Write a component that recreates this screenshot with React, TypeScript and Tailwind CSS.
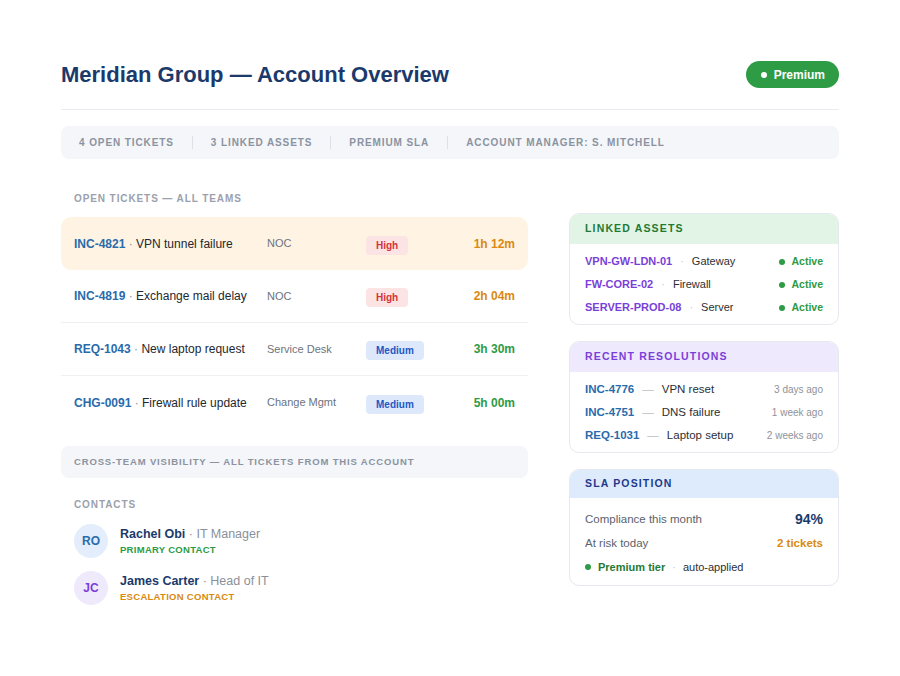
import React from "react";

const tickets = [
  { id: "INC-4821", name: "VPN tunnel failure", team: "NOC", pri: "High", time: "1h 12m", hl: true },
  { id: "INC-4819", name: "Exchange mail delay", team: "NOC", pri: "High", time: "2h 04m", hl: false },
  { id: "REQ-1043", name: "New laptop request", team: "Service Desk", pri: "Medium", time: "3h 30m", hl: false },
  { id: "CHG-0091", name: "Firewall rule update", team: "Change Mgmt", pri: "Medium", time: "5h 00m", hl: false },
];

const assets = [
  { id: "VPN-GW-LDN-01", type: "Gateway" },
  { id: "FW-CORE-02", type: "Firewall" },
  { id: "SERVER-PROD-08", type: "Server" },
];

const resolutions = [
  { id: "INC-4776", name: "VPN reset", when: "3 days ago" },
  { id: "INC-4751", name: "DNS failure", when: "1 week ago" },
  { id: "REQ-1031", name: "Laptop setup", when: "2 weeks ago" },
];

export default function App() {
  return (
    <div className="min-h-[676px] bg-white" style={{ fontFamily: '"Liberation Sans", Arial, sans-serif' }}>
      <div className="mx-auto w-[778px] pt-[61px]">
        <div className="flex items-center justify-between border-b border-[#e8ebf0] pb-[21px]">
          <h1 className="text-[22px] font-bold leading-[27px] text-[#1b3a6b]">
            Meridian Group — Account Overview
          </h1>
          <div className="flex h-[27px] items-center gap-[7px] rounded-full bg-[#2e9b45] pl-[15px] pr-[14px] text-[12px] font-bold text-white">
            <span className="h-[6px] w-[6px] rounded-full bg-white" />
            Premium
          </div>
        </div>

        <div className="mt-[16px] flex h-[33px] items-center rounded-[8px] bg-[#f4f6f9] px-[18px] text-[10px] font-bold tracking-[0.09em] text-[#8b93a1]">
          <span>4 OPEN TICKETS</span>
          <span className="mx-[18px] h-[13px] w-px bg-[#dde1e7]" />
          <span>3 LINKED ASSETS</span>
          <span className="mx-[18px] h-[13px] w-px bg-[#dde1e7]" />
          <span>PREMIUM SLA</span>
          <span className="mx-[18px] h-[13px] w-px bg-[#dde1e7]" />
          <span>ACCOUNT MANAGER: S. MITCHELL</span>
        </div>

        <div className="mt-[30px] flex gap-[41px]">
          <div className="w-[467px]">
            <div className="px-[13px] text-[10px] font-bold leading-[20px] tracking-[0.09em] text-[#9aa1ad]">
              OPEN TICKETS — ALL TEAMS
            </div>
            <div className="mt-[8px]">
              {tickets.map((t, i) => (
                <div
                  key={t.id}
                  className={
                    "flex h-[53px] items-center px-[13px] " +
                    (t.hl
                      ? "rounded-[10px] bg-[#fff3e3]"
                      : i < tickets.length - 1
                      ? "border-b border-[#eef0f3]"
                      : "")
                  }
                >
                  <div className="w-[193px] whitespace-nowrap text-[12px]">
                    <span className="font-bold text-[#2a6bac]">{t.id}</span>
                    <span className="text-[#8a8f98]"> · </span>
                    <span className="text-[#222831]">{t.name}</span>
                  </div>
                  <div className="w-[99px] text-[11px] text-[#6d737d]">{t.team}</div>
                  <div className="flex-1">
                    <span
                      className={
                        "inline-block rounded-[4px] px-[10px] py-[2px] text-[10px] font-bold " +
                        (t.pri === "High" ? "bg-[#fde4e4] text-[#d1343a]" : "bg-[#dde9fb] text-[#2456c4]")
                      }
                    >
                      {t.pri}
                    </span>
                  </div>
                  <div
                    className={
                      "text-[12px] font-bold " + (t.pri === "High" ? "text-[#d98a10]" : "text-[#2e9b45]")
                    }
                  >
                    {t.time}
                  </div>
                </div>
              ))}
            </div>

            <div className="mt-[17px] flex h-[32px] items-center rounded-[8px] bg-[#f4f6f9] px-[13px] text-[9.5px] font-bold tracking-[0.09em] text-[#8b93a1]">
              CROSS-TEAM VISIBILITY — ALL TICKETS FROM THIS ACCOUNT
            </div>

            <div className="mt-[20px] px-[13px] text-[10px] font-bold leading-[14px] tracking-[0.09em] text-[#9aa1ad]">
              CONTACTS
            </div>
            <div className="mt-[12px] flex flex-col gap-[13px] px-[13px]">
              <div className="flex items-center gap-[12px]">
                <div className="flex h-[34px] w-[34px] items-center justify-center rounded-full bg-[#e3edfc] text-[12px] font-bold text-[#2a6bac]">
                  RO
                </div>
                <div className="mt-[1px]">
                  <div className="text-[12.5px] leading-[17px]">
                    <span className="font-bold text-[#1b3a6b]">Rachel Obi</span>
                    <span className="text-[#8a909a]"> · IT Manager</span>
                  </div>
                  <div className="text-[9.5px] font-bold leading-[14px] tracking-[0.03em] text-[#2e9b45]">
                    PRIMARY CONTACT
                  </div>
                </div>
              </div>
              <div className="flex items-center gap-[12px]">
                <div className="flex h-[34px] w-[34px] items-center justify-center rounded-full bg-[#efe9fc] text-[12px] font-bold text-[#7a3fd9]">
                  JC
                </div>
                <div className="mt-[1px]">
                  <div className="text-[12.5px] leading-[17px]">
                    <span className="font-bold text-[#1b3a6b]">James Carter</span>
                    <span className="text-[#8a909a]"> · Head of IT</span>
                  </div>
                  <div className="text-[9.5px] font-bold leading-[14px] tracking-[0.03em] text-[#d98a10]">
                    ESCALATION CONTACT
                  </div>
                </div>
              </div>
            </div>
          </div>

          <div className="flex w-[270px] flex-col gap-[16px] pt-[24px]">
            <div className="overflow-hidden rounded-[10px] border border-[#e6e9ee]">
              <div className="flex h-[30px] items-center bg-[#e2f4e5] px-[15px] text-[10.5px] font-bold tracking-[0.11em] text-[#1f7a36]">
                LINKED ASSETS
              </div>
              <div className="flex flex-col px-[15px] pb-[5px] pt-[6px]">
                {assets.map((a) => (
                  <div key={a.id} className="flex h-[23px] items-center text-[11px]">
                    <span className="font-bold text-[#7a3fd9]">{a.id}</span>
                    <span className="mx-[8px] text-[#c4c8ce]">·</span>
                    <span className="text-[#2b2f36]">{a.type}</span>
                    <span className="ml-auto flex items-center gap-[6px] text-[10.5px] font-bold text-[#2e9b45]">
                      <span className="h-[6px] w-[6px] rounded-full bg-[#2e9b45]" />
                      Active
                    </span>
                  </div>
                ))}
              </div>
            </div>

            <div className="overflow-hidden rounded-[10px] border border-[#e6e9ee]">
              <div className="flex h-[30px] items-center bg-[#efe9fd] px-[15px] text-[10.5px] font-bold tracking-[0.11em] text-[#7a3fd9]">
                RECENT RESOLUTIONS
              </div>
              <div className="flex flex-col px-[15px] pb-[5px] pt-[6px]">
                {resolutions.map((r) => (
                  <div key={r.id} className="flex h-[23px] items-center text-[11.5px]">
                    <span className="font-bold text-[#2a6bac]">{r.id}</span>
                    <span className="mx-[8px] text-[#b9bdc4]">—</span>
                    <span className="text-[#2b2f36]">{r.name}</span>
                    <span className="ml-auto text-[10px] text-[#8e939b]">{r.when}</span>
                  </div>
                ))}
              </div>
            </div>

            <div className="overflow-hidden rounded-[10px] border border-[#e6e9ee]">
              <div className="flex h-[28px] items-center bg-[#deebfc] px-[15px] text-[10.5px] font-bold tracking-[0.11em] text-[#1e3a8a]">
                SLA POSITION
              </div>
              <div className="flex flex-col px-[15px] pb-[7px] pt-[9px]">
                <div className="flex h-[25px] items-center">
                  <span className="text-[11.5px] text-[#5b626c]">Compliance this month</span>
                  <span className="ml-auto text-[14px] font-bold text-[#1b3a6b]">94%</span>
                </div>
                <div className="flex h-[24px] items-center">
                  <span className="text-[11.5px] text-[#5b626c]">At risk today</span>
                  <span className="ml-auto text-[11.5px] font-bold text-[#d98a10]">2 tickets</span>
                </div>
                <div className="flex h-[22px] items-center text-[11px]">
                  <span className="mr-[7px] h-[6px] w-[6px] rounded-full bg-[#2e9b45]" />
                  <span className="font-bold text-[#1f7a36]">Premium tier</span>
                  <span className="mx-[7px] text-[#c4c8ce]">·</span>
                  <span className="text-[#2b2f36]">auto-applied</span>
                </div>
              </div>
            </div>
          </div>
        </div>
      </div>
    </div>
  );
}
